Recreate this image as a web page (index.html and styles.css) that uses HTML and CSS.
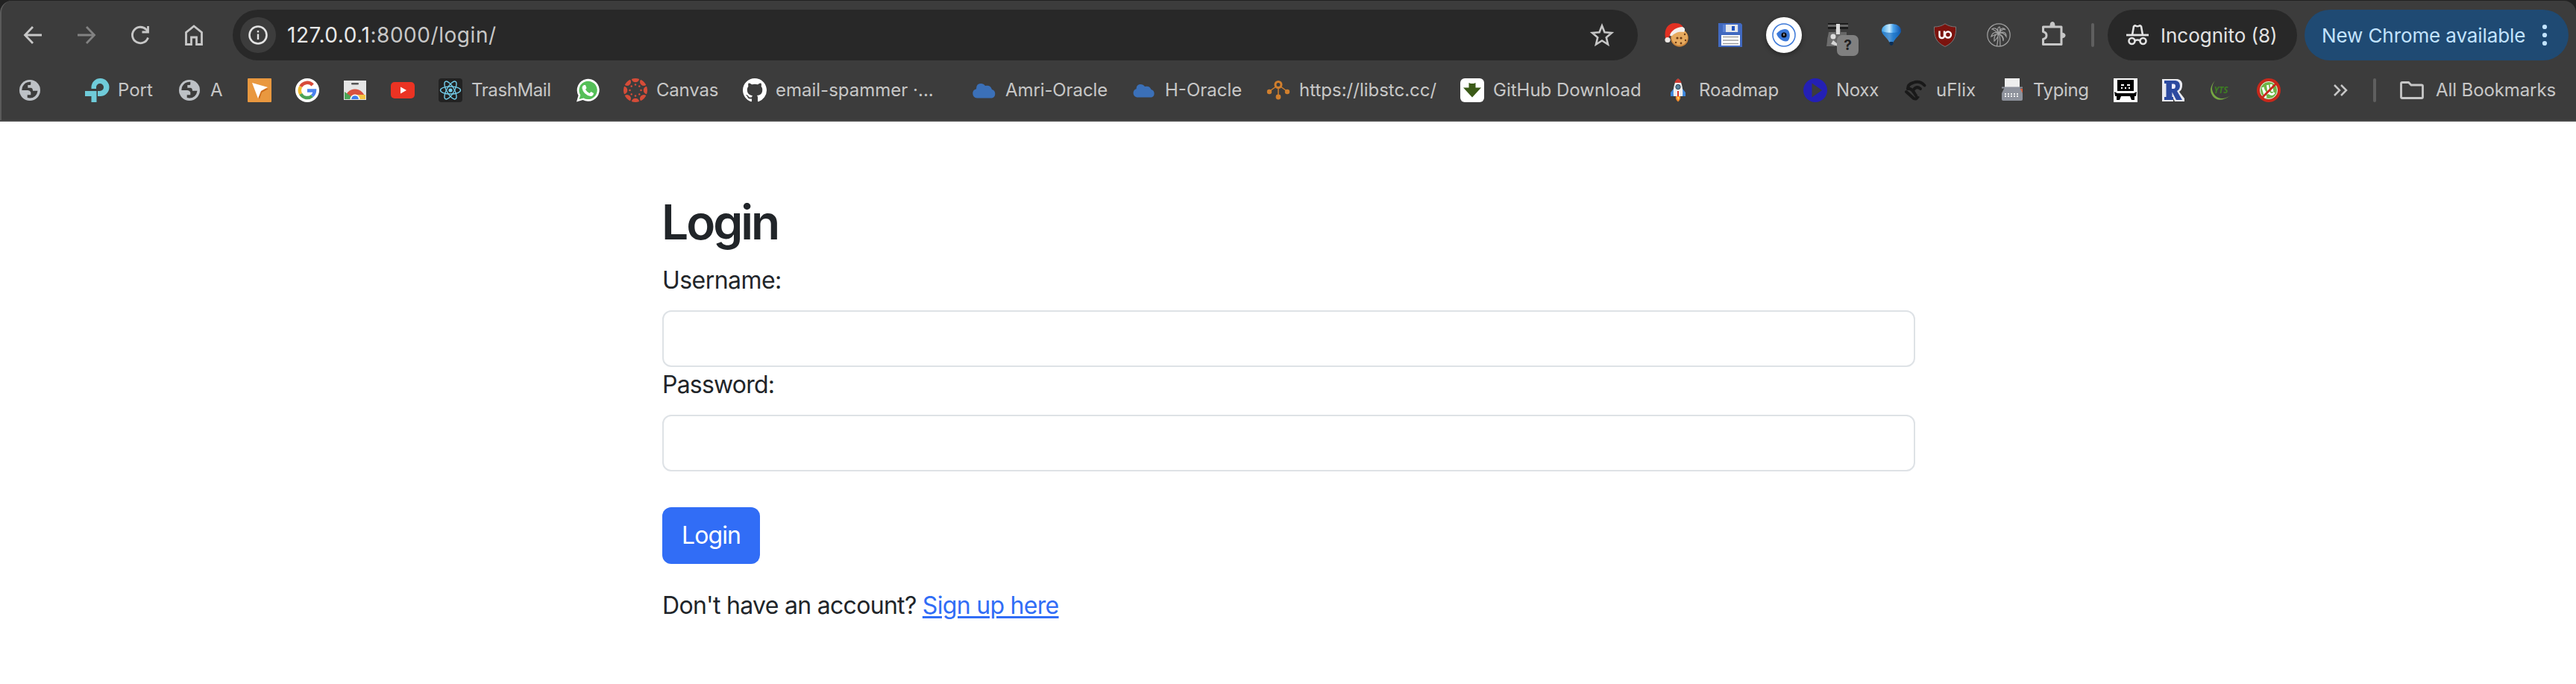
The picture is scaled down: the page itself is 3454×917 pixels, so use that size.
FILE: index.html
```html
<!DOCTYPE html>
<html lang="en">
<head>
<meta charset="utf-8">
<title>Login</title>
<link rel="stylesheet" href="styles.css">
</head>
<body>
<header class="chrome">
  <div class="toolbar">
    <nav class="nav">
      <svg class="i" viewBox="0 0 32 32"><path class="ln" d="M28 16H6M16 5L5.500 16L16 27"/></svg>
      <svg class="i dim" viewBox="0 0 32 32"><path class="ln" d="M4 16H26M16 5L26.500 16L16 27"/></svg>
      <svg class="i" viewBox="0 0 32 32"><path class="ln" d="M26.500 19.500A10.800 10.800 0 1 1 24 8.500L26 11"/><path class="ln" d="M26.500 4V12H18.500"/></svg>
      <svg class="i" viewBox="0 0 32 32"><path class="ln" d="M5.500 28.500V12.500L16 4L26.500 12.500V28.500H19.500V19H12.500V28.500Z"/></svg>
    </nav>
    <div class="omnibox">
      <span class="info"><svg viewBox="0 0 26 26"><circle cx="13" cy="13" r="11.500" fill="none" stroke="#e3e3e3" stroke-width="2.600"/><path d="M13 11.500V19M13 7V9.500" stroke="#e3e3e3" stroke-width="2.400"/></svg></span>
      <span class="url"><b>127.0.0.1</b>:8000/login/</span>
      <svg class="i star" viewBox="0 0 32 32"><path d="M16 3.500L19.500 12.200L29 13L21.800 19.200L24 28.500L16 23.500L8 28.500L10.200 19.200L3 13L12.500 12.200Z" fill="none" stroke="#c7c7c7" stroke-width="2.600"/></svg>
    </div>
    <div class="exts">
      <svg class="i" viewBox="0 0 32 32"><circle cx="20" cy="20" r="11.800" fill="#c9843c"/><circle cx="20" cy="18.800" r="10.800" fill="#e6aa5e"/><g fill="#6d3d18"><circle cx="17" cy="20" r="1.600"/><circle cx="22" cy="20" r="1.600"/><circle cx="15" cy="26" r="1.300"/><circle cx="22" cy="27" r="1.400"/><circle cx="28" cy="23" r="1.200"/><circle cx="27" cy="15" r="1.200"/></g><path d="M1 20C-1 8 4 0 14 0C21 0 25 3 25 8L8 16C6 17 5 19 5 21Z" fill="#e23022"/><path d="M7 16C9 10 16 5 24 5Q29 7 26 12C18 11 14 13 10 17Q7 18 7 16Z" fill="#f4efec"/><circle cx="4" cy="22.500" r="3.600" fill="#eee9e6"/></svg>
      <svg class="i" viewBox="0 0 32 32"><path d="M0 0H30L32 2V32H0Z" fill="#4169c0"/><path d="M6 2H27V12H6Z" fill="#5c82d3"/><path d="M10 2H26V12H10Z" fill="#e4e6ea"/><path d="M18 4H22V10H18Z" fill="#2354bf"/><path d="M4 16H29V30H4Z" fill="#fff"/><path d="M6 18.500H27M6 23H27M6 27.500H27" stroke="#a0a0a0" stroke-width="1.600"/></svg>
      <span class="eye"><svg viewBox="0 0 48 48"><circle cx="24" cy="24" r="15" fill="none" stroke="#3b78d8" stroke-width="1.500"/><path d="M14 22C19 16 27 14 30 18C33 23 32 29 29 32C24 34 16 29 14 22Z" fill="#3b78d8"/><circle cx="24" cy="24" r="3.600" fill="#0b0b12"/><path d="M24 22V25" stroke="#fff"/></svg></span>
      <span class="blocked"><svg class="i" viewBox="0 0 32 32"><path d="M3 1H30V8H20V12H28V28H2Q1 18 6 12H13V8H3Z" fill="#666"/><path d="M3 0H30V2H3ZM3 5H30V8H3Z" fill="#1c1c1c"/><path d="M14 1H19V15H14Z" fill="#ddd"/><path d="M1 31L4 12H13V31Z" fill="#6d6d6d"/><circle cx="10" cy="18" r="3.500" fill="#ddd"/><path d="M7 28L10 23L16 28V31Z" fill="#d5d5d5"/></svg><em>?</em></span>
      <svg class="i" viewBox="0 0 32 32"><defs><linearGradient id="bal"><stop offset="0" stop-color="#3b9fe8"/><stop offset=".4" stop-color="#c9ecff"/><stop offset=".6" stop-color="#4aa3ec"/><stop offset="1" stop-color="#0d4fa6"/></linearGradient></defs><path d="M16 1C24 1 29 5 29 10C29 15 20 21 18.500 26H13.500C12 21 3 15 3 10C3 5 8 1 16 1Z" fill="url(#bal)"/><path d="M3 11Q16 15 29 11C28 16 20 21 18.500 26H13.500C12 21 4 16 3 11Z" fill="#1269bd" opacity=".65"/><path d="M13.500 25H18.500V28Q16 32 13.500 28Z" fill="#0d2f55"/></svg>
      <svg class="i" viewBox="0 0 32 32"><path d="M16 .8Q22 5 30.500 5C31 18 28 26 16 31.500C4 26 1 18 1.500 5Q10 5 16 .8Z" fill="#7b130e" stroke="#777" stroke-width="1"/><path d="M8.500 10.500V16.500A3.300 3.300 0 0 0 15 17.500V10.500" fill="none" stroke="#fff" stroke-width="2.400"/><circle cx="20" cy="15.500" r="4" fill="none" stroke="#fff" stroke-width="2.400"/></svg>
      <svg class="i" viewBox="0 0 32 32"><g fill="none" stroke="#a2a2a2" stroke-width="1.200"><circle cx="16" cy="16" r="15.200"/><path d="M15 15Q15.500 22 13.500 31M17 15Q18 22 18 31M16 14Q8 10 6 18Q11 15 16 14Q9 15 10 24Q15 20 16 14Q22 18 22 24Q24 18 16 14Q22 11 26 18Q26 9 16 14Q22 6 25 9Q20 3 16 14Q13 4 7 8Q10 9 16 14Q13 6 17 5Q19 8 16 14"/></g></svg>
      <svg class="i" viewBox="0 0 32 32"><path d="M3.500 5H28V13.500V19.500V28.500H3.500V21.500Q8 20.500 8 16.500Q8 12.500 3.500 11.500Z" fill="none" stroke="#c7c7c7" stroke-width="3" stroke-linejoin="round"/><path d="M12.500 4Q12.500-2 16-2T19.500 4Z" fill="#c7c7c7"/><path d="M28 12.500Q33.500 13 33.500 16.500T28 20.500Z" fill="#c7c7c7"/></svg>
    </div>
    <i class="sep"></i>
    <div class="incog">
      <svg viewBox="0 0 30 28"><path d="M8 14L10 2.500Q11 1 12.500 1.500Q15 3 17.500 1.500Q19 1 20 2.500L22 14" fill="none" stroke="#e3e3e3" stroke-width="2.600"/><path d="M0 14H30" stroke="#e3e3e3" stroke-width="2.800"/><g fill="none" stroke="#e3e3e3" stroke-width="2.600"><circle cx="7.500" cy="22" r="4"/><circle cx="22.500" cy="22" r="4"/><path d="M11.500 21.500Q15 19.500 18.500 21.500"/></g></svg>
      <span>Incognito (8)</span>
    </div>
    <div class="update"><span>New Chrome available</span>
      <svg viewBox="0 0 8 30"><circle cx="4" cy="4" r="3.100"/><circle cx="4" cy="15" r="3.100"/><circle cx="4" cy="26" r="3.100"/></svg></div>
  </div>

  <div class="bookmarks">
    <a class="bm wide"><svg class="i" viewBox="0 0 32 32"><g id="globe"><circle cx="16" cy="16" r="14" fill="#bdc1c6"/><path d="M17.300 4.800V8Q17.300 9 16 9H13.300V12.800H17Q20 13 20 16.700H26.500Q26 21 23 24Q20 26.500 16 26.500L12.700 26V22.300H17.300V18.500Q16 16 13.300 16H5.300Q5.500 10 10 6.500Q13 4.500 17.300 4.800Z" fill="#3c3c3c"/></g></svg></a>
    <a class="bm"><svg class="i" viewBox="0 0 32 32"><path d="M8.500 14V12A12 12 0 1 1 20 24H17V17H20A5 5 0 1 0 15 12V14Z" fill="#6fcbd9"/><path d="M0 17H15.500V32H8.500V24H0Z" fill="#6fcbd9"/></svg><span class="t-port">Port</span></a>
    <a class="bm"><svg class="i" viewBox="0 0 32 32"><use href="#globe"/></svg><span class="t-a">A</span></a>
    <a class="bm"><svg class="i" viewBox="0 0 32 32"><rect width="32" height="32" rx="1" fill="#e9983f"/><path d="M8 10L28 14L19 19L16 28Z" fill="#d06f1d"/><path d="M6 6L27 12L18 17L14 27Z" fill="#fff"/></svg></a>
    <a class="bm"><svg class="i" viewBox="0 0 32 32"><circle cx="16" cy="16" r="16" fill="#fff"/><g fill="none" stroke-width="4.500"><path d="M7.200 11A10 10 0 0 1 23.200 9" stroke="#d84a3a"/><path d="M7.200 11A10 10 0 0 0 7.200 21" stroke="#f3bb2f"/><path d="M7.200 21A10 10 0 0 0 22.500 23.600" stroke="#4aa355"/><path d="M22.500 23.600A10 10 0 0 0 26 16.500H16" stroke="#4b83ee"/></g></svg></a>
    <a class="bm"><svg class="i" viewBox="0 0 32 32"><path d="M1 3H31V29H1Z" fill="#e6e6e6"/><clipPath id="cw"><path d="M2 12H30V28H2Z"/></clipPath><g clip-path="url(#cw)"><circle cx="16" cy="28" r="13.500" fill="#d9513f"/><path d="M16 28L2 18V29Z" fill="#4ba557"/><path d="M16 22H30V29H16Z" fill="#f5c443"/><circle cx="16" cy="28" r="6.500" fill="#fff"/><circle cx="16" cy="28" r="4.800" fill="#3e7ded"/></g><rect x="11" y="6" width="10" height="2.600" rx="1.300" fill="#555"/></svg></a>
    <a class="bm"><svg class="i" viewBox="0 0 32 32"><rect y="5" width="32" height="22" rx="5" fill="#eb3323"/><path d="M13 11.500L21 16L13 20.500Z" fill="#fff"/></svg></a>
    <a class="bm"><svg class="i" viewBox="0 0 32 32"><rect width="32" height="32" rx="4" fill="#222"/><g fill="none" stroke="#74cfec" stroke-width="1.400"><ellipse cx="16" cy="16" rx="13.500" ry="5"/><ellipse cx="16" cy="16" rx="13.500" ry="5" transform="rotate(60 16 16)"/><ellipse cx="16" cy="16" rx="13.500" ry="5" transform="rotate(120 16 16)"/></g><circle cx="16" cy="16" r="2.600" fill="#74cfec"/></svg><span class="t-trash">TrashMail</span></a>
    <a class="bm"><svg class="i" viewBox="0 0 32 32"><path d="M1 31.500L3.500 23A15 15 0 1 1 9.500 29Z" fill="#fff"/><path d="M4.500 28L6.300 22.500A12.200 12.200 0 1 1 10.500 26.500Z" fill="#55bf58"/><path d="M11 9H13L14.500 13L13 15Q15 18.500 18.500 20L20.500 18L24 20Q23.500 24 20 24Q10 22 8.500 13Q8.500 10 11 9Z" fill="#fff"/></svg></a>
    <a class="bm"><svg class="i" viewBox="0 0 32 32"><g fill="#d64c38"><g id="cv"><path d="M10.800 1Q16-1 21.200 1Q20 5.300 16 5.300T10.800 1Z"/><circle cx="16" cy="8.500" r="1.300"/></g><use href="#cv" transform="rotate(45 16 16)"/><use href="#cv" transform="rotate(90 16 16)"/><use href="#cv" transform="rotate(135 16 16)"/><use href="#cv" transform="rotate(180 16 16)"/><use href="#cv" transform="rotate(225 16 16)"/><use href="#cv" transform="rotate(270 16 16)"/><use href="#cv" transform="rotate(315 16 16)"/></g></svg><span class="t-canvas">Canvas</span></a>
    <a class="bm"><svg class="i" viewBox="0 0 16 16"><path fill="#fff" d="M8 0C3.580 0 0 3.580 0 8c0 3.540 2.290 6.530 5.470 7.590.4.070.55-.17.55-.38 0-.19-.01-.82-.01-1.490-2.010.37-2.530-.49-2.690-.94-.09-.23-.48-.94-.82-1.130-.28-.15-.68-.52-.01-.53.63-.01 1.080.58 1.230.82.72 1.210 1.870.87 2.330.66.07-.52.28-.87.51-1.070-1.780-.2-3.640-.89-3.640-3.950 0-.87.31-1.590.82-2.150-.08-.2-.36-1.020.08-2.120 0 0 .67-.21 2.200.82.64-.18 1.320-.27 2-.27s1.360.09 2 .27c1.530-1.040 2.200-.82 2.200-.82.44 1.100.16 1.920.08 2.120.51.56.82 1.270.82 2.150 0 3.070-1.870 3.750-3.650 3.950.29.25.54.73.54 1.480 0 1.070-.01 1.930-.01 2.200 0 .21.15.46.55.38A8.010 8.010 0 0 0 16 8c0-4.420-3.580-8-8-8z"/></svg><span class="t-email">email-spammer ·...</span></a>
    <a class="bm"><svg class="i" viewBox="0 0 32 32"><path d="M6 26.500A6.200 6.200 0 0 1 5 14.300Q5 7 11 7Q15 7 17 10Q24 8.500 26 15A6 6 0 0 1 26 26.500Z" fill="#3b70b8"/></svg><span class="t-amri">Amri-Oracle</span></a>
    <a class="bm"><svg class="i" viewBox="0 0 32 32"><path d="M6.500 25.500A5.800 5.800 0 0 1 5.500 14.300Q6 8 11 8Q15 8 17 11Q23.500 9.500 25.500 15A5.500 5.500 0 0 1 26 25.500Z" fill="#3b70b8"/></svg><span class="t-h">H-Oracle</span></a>
    <a class="bm"><svg class="i" viewBox="0 0 32 32"><g stroke="#d17f2d" fill="none"><circle cx="16" cy="8.500" r="4" stroke-width="3"/><path d="M13 11L4 17.500M19 11L28 17.500M16 12V25" stroke-width="1.500"/></g><g fill="#d17f2d"><circle cx="4" cy="18" r="3.200"/><circle cx="28" cy="18" r="3.200"/><circle cx="16" cy="25" r="3.400"/></g></svg><span class="t-lib">https://libstc.cc/</span></a>
    <a class="bm"><svg class="i" viewBox="0 0 32 32"><rect width="32" height="32" rx="6" fill="#fff"/><path d="M11.500 6L14 7H18L20.500 6V12.500H28L16 25.500L4 12.500H11.500Z" fill="#3b5a18"/></svg><span class="t-ghd">GitHub Download</span></a>
    <a class="bm"><svg class="i" viewBox="0 0 32 32"><path d="M10 14L6 19V24H11ZM22 14L26 19V24H21Z" fill="#3c86dc"/><path d="M10 24C9 14 11 4 16 .5C21 4 23 14 22 24Z" fill="#eee"/><path d="M11.300 6C12.500 3 14 1.500 16 .5C18 1.500 19.500 3 20.700 6Z" fill="#cc3a30"/><circle cx="16" cy="11.500" r="3.200" fill="#57809c" stroke="#2f4655"/><path d="M15 17H17V24H15Z" fill="#d8352c"/><path d="M13 24H19Q20 28 16 31.500Q12 28 13 24Z" fill="#f18a2c"/><path d="M15 25H17V28L16 29Z" fill="#ffdf68"/></svg><span class="t-road">Roadmap</span></a>
    <a class="bm"><svg class="i" viewBox="0 0 32 32"><circle cx="16" cy="16" r="16" fill="#2420b5"/><path d="M11.500 6.500L25 16L11.500 25.500Z" fill="#3c3c3c"/></svg><span class="t-noxx">Noxx</span></a>
    <a class="bm"><svg class="i" viewBox="0 0 32 32"><g fill="none" stroke="#191919" stroke-width="4" stroke-linecap="round"><path d="M6 14Q6 8 13 6Q22 2.500 28.500 9.500M14 15Q18 10 23 14M6 14Q11 13 15 20T20 24Q18 29 14 27L4 18"/></g></svg><span class="t-uflix">uFlix</span></a>
    <a class="bm"><svg class="i" viewBox="0 0 32 32"><path d="M6 0H26V14H6Z" fill="#eee"/><path d="M2 12.500H30" stroke="#8e929c" stroke-width="2"/><path d="M26 14L30 14V19H27Z" fill="#e15b36"/><path d="M6 12H26L30 20V28Q30 30 28 30H4Q2 30 2 28V20Z" fill="#8e929c"/><path d="M6 21H26M6 24H26" stroke="#eee" stroke-width="2" stroke-dasharray="2 2"/></svg><span class="t-typing">Typing</span></a>
    <a class="bm"><svg class="i" viewBox="0 0 32 32"><path d="M0 0H32V32H0Z" fill="#fff"/><path d="M5 2H27V17H5Z"/><path d="M10 8H14V10H10ZM18 8H22V10H18ZM10 12H12V14H10ZM15 12H17V14H15ZM20 12H22V14H20Z" fill="#fff"/><path d="M1 18L5 20H27L31 18L30 24H28V29H24L22 24H10L8 29H4V24H2Z"/></svg></a>
    <a class="bm"><svg class="i" viewBox="0 0 32 32"><path d="M1 1H22Q29 3 28 10Q28 15 24 18L31 27V31H18L16 27V31H1Z" fill="#e9eaf0"/><path d="M4 3H19Q25 4 25 10Q25 15 21 17L28 29H20L14.500 18.500V25H16V29H4V25H6.500V7H4Z" fill="#2c4aa0"/><path d="M14 7.500H17Q19 8 19 10.500T17 14H14Z" fill="#eef"/></svg></a>
    <a class="bm"><svg class="i" viewBox="0 0 32 32"><path d="M8 3Q-2 14 5 24Q13 34 29 23Q16 31 8 23Q0 14 8 3Z" fill="#76a843"/><text x="6.500" y="19.500" class="yts" textLength="19" lengthAdjust="spacingAndGlyphs">YTS</text></svg></a>
    <a class="bm"><svg class="i" viewBox="0 0 32 32"><circle cx="16" cy="16" r="14" fill="#6db544" stroke="#c8281b" stroke-width="4"/><circle cx="16" cy="16" r="11.500" fill="none" stroke="#eee" stroke-width="1"/><path d="M8 12L12 26M9.500 16Q12 22 16 19L14.500 9M16 19Q20 24 23.500 19M19 8L21 18" stroke="#fff" stroke-width="3" fill="none"/><path d="M7 26L26 7" stroke="#c8281b" stroke-width="2.800"/></svg></a>
    <div class="end">
      <svg class="more" viewBox="0 0 20 16"><path d="M2 1L9 8L2 15M11 1L18 8L11 15" fill="none" stroke="#c7c7c7" stroke-width="2.500"/></svg>
      <i class="sep"></i>
      <svg class="i" viewBox="0 0 32 32"><path d="M1.500 25V7Q1.500 5.500 3 5.500H11.500L15 9H29Q30.500 9 30.500 10.500V25Q30.500 26.500 29 26.500H3Q1.500 26.500 1.500 25Z" fill="none" stroke="#c7c7c7" stroke-width="2.800"/></svg>
      <span>All Bookmarks</span>
    </div>
  </div>
</header>

<main class="page">
  <h2>Login</h2>
  <form>
    <label class="user" for="u">Username:</label>
    <input id="u" type="text">
    <label class="pass" for="p">Password:</label>
    <input id="p" type="password">
    <button type="button">Login</button>
  </form>
  <p>Don't have an account? <a href="#">Sign up here</a></p>
</main>
</body>
</html>
```

FILE: styles.css
```css
* { box-sizing: border-box; }
body { margin: 0; background: #fff; color: #212529; font-family: Inter, "Liberation Sans", sans-serif; }
svg { display: block; flex: none; overflow: visible; }
.i { width: 32px; height: 32px; }
.ln { fill: none; stroke: #c7c7c7; stroke-width: 2.800; }
.dim { opacity: .5; }

.chrome { height: 163px; padding-top: 1px; background: linear-gradient(#222 0 30px, #4a4a4a 30px); color: #c7c7c7; white-space: nowrap; }
.toolbar { display: flex; align-items: center; height: 92px; background: #3c3c3c; border-left: 2px solid #5a5a5a; border-radius: 16px 16px 0 0; }
.nav { display: flex; gap: 40px; margin-left: 26px; width: 284px; }
.omnibox { display: flex; align-items: center; width: 1884px; height: 68px; padding: 0 32px 0 10px; border-radius: 34px; background: #282828; }
.info { display: grid; place-items: center; width: 48px; height: 48px; border-radius: 50%; background: #3c3c3c; }
.info svg { width: 26px; height: 26px; }
.url { margin-left: 15px; font-size: 28px; letter-spacing: .55px; }
.url b { font-weight: 400; color: #e8e8e8; }
.star { margin-left: auto; }
.exts { display: flex; align-items: center; gap: 40px; margin-left: 36px; }
.eye { width: 48px; height: 48px; margin: 0 -8px; border-radius: 50%; background: #fff; box-shadow: 0 2px 6px rgba(0,0,0,.4); }
.blocked { position: relative; }
.blocked em { position: absolute; left: 15px; top: 16px; width: 29px; height: 28px; border-radius: 7px; background: #808080; color: #222; font: 700 19px/28px Inter, sans-serif; text-align: center; }
.sep { width: 4px; height: 32px; border-radius: 2px; background: #5f5f5f; }
.toolbar > .sep { margin-left: 36px; }
.incog { display: flex; align-items: center; width: 254px; height: 68px; margin-left: 18px; padding-left: 25px; border-radius: 34px; background: #282828; color: #e3e3e3; font-size: 26px; }
.incog svg { width: 30px; height: 28px; margin-right: 16px; }
.update { display: flex; align-items: center; justify-content: space-between; width: 364px; height: 68px; margin: 0 10px; padding: 0 28px 0 23px; border-radius: 34px; background: #1f4a73; color: #c2e3ff; font-size: 26px; letter-spacing: -.1px; }
.update { width: 354px; }
.update svg { width: 8px; height: 30px; fill: #c2e3ff; }

.bookmarks { display: flex; gap: 32px; height: 68px; padding: 12px 0 0 22px; background: #3c3c3c; border-left: 2px solid #5a5a5a; font-size: 24px; line-height: 32px; }
.bm { display: flex; flex: none; gap: 12px; }
.wide { width: 58px; }
.t-port { width: 48px; }
.t-a { width: 18px; }
.t-trash { width: 108px; letter-spacing: -.4px; }
.t-canvas { width: 84px; letter-spacing: -.2px; }
.t-email { width: 232px; }
.t-amri { width: 138px; letter-spacing: -.1px; }
.t-h { width: 104px; }
.t-lib { width: 184px; }
.t-ghd { width: 200px; }
.t-road { width: 108px; }
.t-noxx { width: 58px; letter-spacing: -.3px; }
.t-uflix { width: 54px; }
.t-typing { width: 76px; letter-spacing: -.4px; }
.yts { font: italic 700 12px "Open Sans", sans-serif; fill: #3d7d22; }
.end { display: flex; align-items: center; height: 32px; margin-left: 38px; letter-spacing: -.1px; }
.more { width: 20px; height: 16px; margin-right: 34px; }
.end .i { margin: 0 16px 0 32px; }

.page { width: 1680px; margin: 0 auto 0 888px; padding-top: 96px; font-size: 32px; line-height: 48px; }
h2 { margin: 0 0 16px -1px; font-size: 64px; font-weight: 600; line-height: 77px; letter-spacing: -3px; }
form { display: flex; flex-direction: column; align-items: flex-start; }
label { margin-bottom: 16px; }
.user { letter-spacing: -.55px; }
.pass { letter-spacing: -.8px; }
input { width: 1680px; height: 76px; border: 2px solid #dee2e6; border-radius: 12px; background: #fff; }
button { width: 131px; height: 76px; margin-top: 48px; padding: 0; border: 0; border-radius: 12px; background: #316df6; color: #fff; font: 32px/48px Inter, sans-serif; letter-spacing: -.9px; }
p { margin: 32px 0 0; white-space: nowrap; letter-spacing: -.7px; }
p a { color: #316df6; text-decoration-thickness: 3px; text-underline-offset: 3px; }
```
